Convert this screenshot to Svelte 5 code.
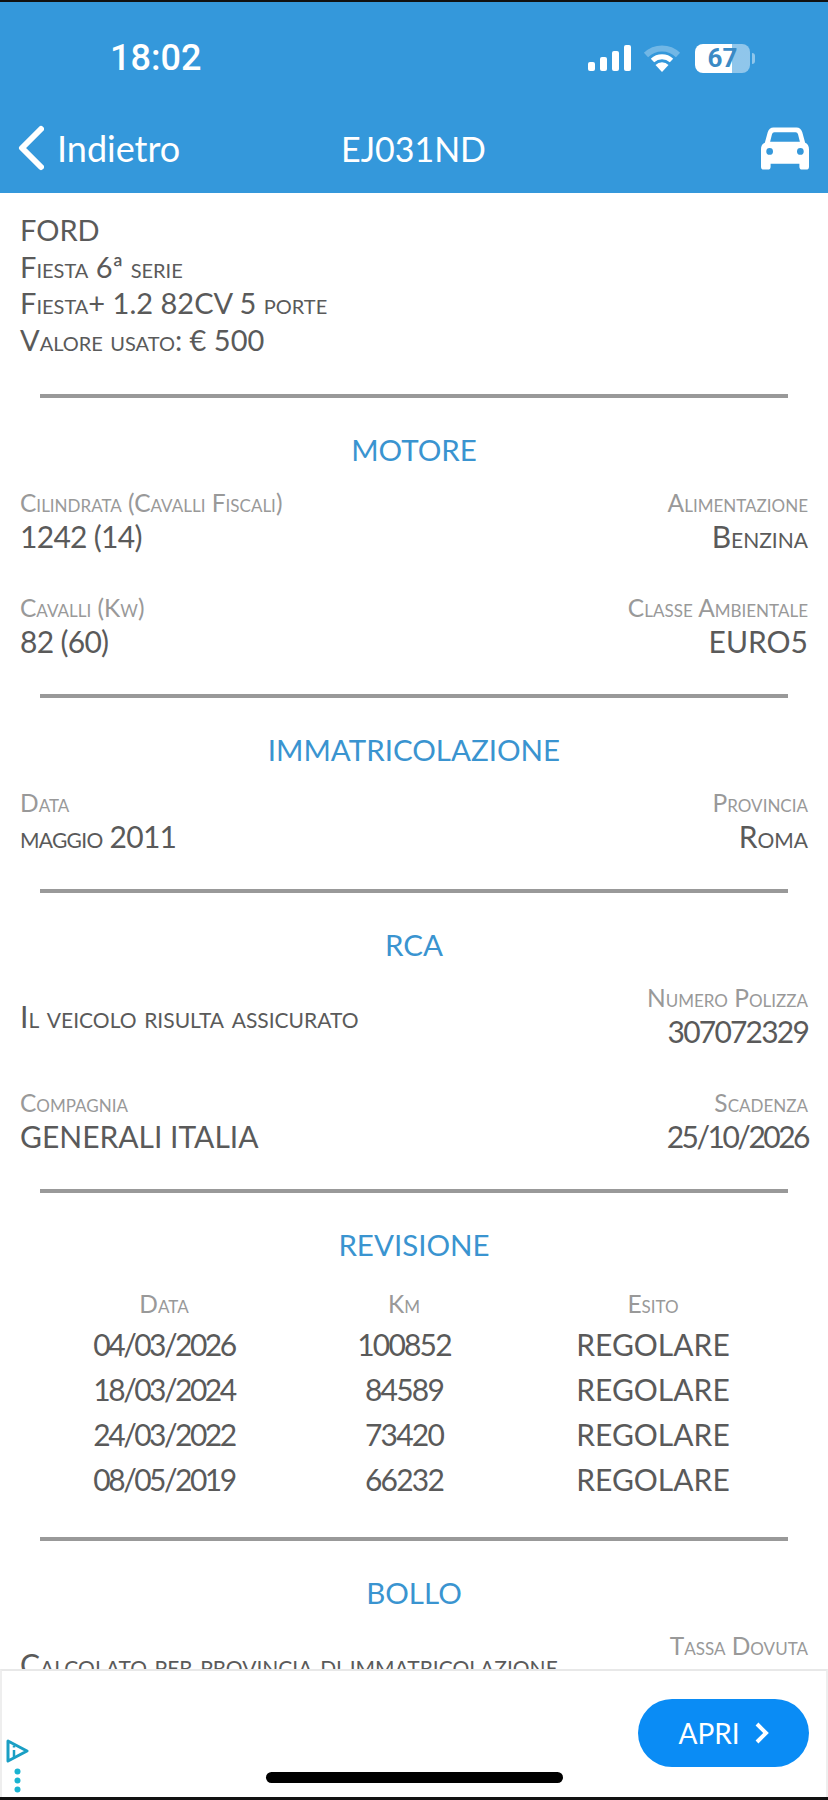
<script>
  const motore = [
    { left: { label: 'Cilindrata (Cavalli Fiscali)', value: '1242 (14)' }, right: { label: 'Alimentazione', value: 'Benzina' } },
    { left: { label: 'Cavalli (Kw)', value: '82 (60)' }, right: { label: 'Classe Ambientale', value: 'EURO5' } }
  ];
  const revisioni = [
    ['04/03/2026', '100852', 'REGOLARE'],
    ['18/03/2024', '84589', 'REGOLARE'],
    ['24/03/2022', '73420', 'REGOLARE'],
    ['08/05/2019', '66232', 'REGOLARE']
  ];
</script>

<div class="screen">
  <header>
    <div class="status">
      <span class="time">18:02</span>
      <div class="status-icons">
        <svg width="43" height="26" viewBox="0 0 43 26" fill="#fff">
          <rect x="0" y="17" width="7" height="9" rx="2" />
          <rect x="12" y="12" width="7" height="14" rx="2" />
          <rect x="24" y="6" width="7" height="20" rx="2" />
          <rect x="36" y="0" width="7" height="26" rx="2" />
        </svg>
        <svg width="38" height="27" viewBox="0 0 38 27" fill="none" stroke-linecap="butt">
          <path d="M3 10 A23 23 0 0 1 35 10" stroke="#fff" stroke-opacity="0.3" stroke-width="6" />
          <path d="M9.500 15.500 A14 14 0 0 1 28.500 15.500" stroke="#fff" stroke-width="5" />
          <path d="M19 27 L12.500 20 A9 9 0 0 1 25.500 20 Z" fill="#fff" />
        </svg>
        <div class="battery">
          <div class="cell"><span>67</span></div>
          <div class="nub"></div>
        </div>
      </div>
    </div>
    <div class="nav">
      <div class="back">
        <svg width="26" height="46" viewBox="0 0 26 46" fill="none" stroke="#fff" stroke-width="6" stroke-linecap="round" stroke-linejoin="round">
          <path d="M23 4 L4 23 L23 42" />
        </svg>
        <span>Indietro</span>
      </div>
      <div class="plate">EJ031ND</div>
      <svg class="car" width="48" height="43" viewBox="0 0 50 44" fill="#fff">
        <path fill-rule="evenodd" d="M13 0 H37 C40 0 42 2 43 5 L46 16 C49 17 50 20 50 23 V41 C50 43 49 44 47 44 H43 C41 44 40 43 40 41 V38 H10 V41 C10 43 9 44 7 44 H3 C1 44 0 43 0 41 V23 C0 20 1 17 4 16 L7 5 C8 2 10 0 13 0 Z M14 5 C12.500 5 12 6 11.500 7 L9.500 15 H40.500 L38.500 7 C38 6 37.500 5 36 5 Z M9 21.500 A3.500 3.500 0 1 0 9 28.500 A3.500 3.500 0 1 0 9 21.500 Z M41 21.500 A3.500 3.500 0 1 0 41 28.500 A3.500 3.500 0 1 0 41 21.500 Z" />
      </svg>
    </div>
  </header>

  <main>
    <section class="intro">
      <div>FORD</div>
      <div>Fiesta 6ª serie</div>
      <div>Fiesta+ 1.2 82CV 5 porte</div>
      <div>Valore usato: € 500</div>
    </section>

    <hr />
    <h2>MOTORE</h2>
    <div class="rows">
      {#each motore as row}
        <div class="row">
          <div>
            <div class="label">{row.left.label}</div>
            <div class="value tight">{row.left.value}</div>
          </div>
          <div class="end">
            <div class="label">{row.right.label}</div>
            <div class="value">{row.right.value}</div>
          </div>
        </div>
      {/each}
    </div>

    <hr />
    <h2>IMMATRICOLAZIONE</h2>
    <div class="rows">
      <div class="row">
        <div>
          <div class="label">Data</div>
          <div class="value tight">maggio 2011</div>
        </div>
        <div class="end">
          <div class="label">Provincia</div>
          <div class="value">Roma</div>
        </div>
      </div>
    </div>

    <hr />
    <h2>RCA</h2>
    <div class="rows">
      <div class="row center">
        <div class="value">Il veicolo risulta assicurato</div>
        <div class="end">
          <div class="label">Numero Polizza</div>
          <div class="value num">307072329</div>
        </div>
      </div>
      <div class="row">
        <div>
          <div class="label">Compagnia</div>
          <div class="value">GENERALI ITALIA</div>
        </div>
        <div class="end">
          <div class="label">Scadenza</div>
          <div class="value date">25/10/2026</div>
        </div>
      </div>
    </div>

    <hr />
    <h2>REVISIONE</h2>
    <div class="table">
      <div class="label">Data</div>
      <div class="label">Km</div>
      <div class="label">Esito</div>
      {#each revisioni as rev}
        <div class="value date">{rev[0]}</div>
        <div class="value num">{rev[1]}</div>
        <div class="value">{rev[2]}</div>
      {/each}
    </div>

    <hr />
    <h2>BOLLO</h2>
    <div class="rows">
      <div class="row center">
        <div class="value">Calcolato per provincia di immatricolazione</div>
        <div class="end">
          <div class="label">Tassa Dovuta</div>
          <div class="value">&nbsp;</div>
        </div>
      </div>
    </div>
  </main>

  <aside class="ad">
    <div class="ad-info">
      <svg width="24" height="24" viewBox="0 0 24 24" fill="none" stroke="#1a9fc4" stroke-width="3" stroke-linejoin="round">
        <path d="M3 2 L22 12 L3 22 Z" />
        <path d="M9 11 V18" stroke-width="2.500" />
        <path d="M9 6.500 V8.500" stroke-width="2.500" />
      </svg>
      <svg width="7" height="25" viewBox="0 0 7 25" fill="#1ab3d1">
        <circle cx="3.500" cy="3.500" r="3" />
        <circle cx="3.500" cy="12.500" r="3" />
        <circle cx="3.500" cy="21.500" r="3" />
      </svg>
    </div>
    <div class="open">
      <span>APRI</span>
      <svg width="15" height="22" viewBox="0 0 15 22" fill="none" stroke="#fff" stroke-width="4">
        <path d="M3 2 L12 11 L3 20" />
      </svg>
    </div>
    <div class="home"></div>
  </aside>
</div>

<style>
  :global(body) {
    margin: 0;
    background: #fff;
  }

  .screen {
    position: relative;
    width: 828px;
    height: 1800px;
    overflow: hidden;
    font-family: Lato, "Open Sans", sans-serif;
    color: #5a5a5a;
    background: #fff;
  }

  header {
    background: #3498db;
    border-top: 2px solid #111;
    height: 193px;
    color: #fff;
    box-sizing: border-box;
  }

  .status {
    display: flex;
    justify-content: space-between;
    align-items: center;
    height: 72px;
    padding: 20px 73px 0 110px;
  }

  .time {
    font-family: Roboto, sans-serif;
    font-size: 36px;
    font-weight: 500;
  }

  .status-icons {
    display: flex;
    align-items: center;
    gap: 12px;
  }

  .battery {
    display: flex;
    align-items: center;
    gap: 2px;
    margin-left: 2px;
  }

  .cell {
    width: 55px;
    height: 29px;
    border-radius: 8px;
    background: linear-gradient(90deg, #fff 67%, rgba(255, 255, 255, 0.45) 67%);
    display: flex;
    align-items: center;
    justify-content: center;
  }

  .cell span {
    font-family: Roboto, sans-serif;
    font-size: 26px;
    font-weight: 700;
    color: #3a8ac5;
  }

  .nub {
    width: 3px;
    height: 11px;
    border-radius: 0 3px 3px 0;
    background: rgba(255, 255, 255, 0.45);
  }

  .nav {
    display: grid;
    grid-template-columns: 1fr auto 1fr;
    align-items: center;
    height: 76px;
    padding: 0 19px 0 18px;
    margin-top: 16px;
  }

  .back {
    display: flex;
    align-items: center;
    gap: 13px;
    font-size: 36px;
  }

  .plate {
    font-size: 34px;
  }

  .car {
    justify-self: end;
  }

  main {
    padding: 19px 20px 0;
  }

  .intro {
    font-size: 29px;
    line-height: 36.600px;
    font-variant: small-caps;
    padding-bottom: 20px;
  }

  .intro > div:first-child {
    font-variant: normal;
  }

  hr {
    border: 0;
    height: 4px;
    background: #999;
    margin: 16px 20px 0;
  }

  h2 {
    margin: 32px 0 0;
    text-align: center;
    font-size: 29.500px;
    line-height: 40px;
    font-weight: 400;
    color: #3a94d0;
  }

  .rows {
    display: flex;
    flex-direction: column;
    gap: 39px;
    margin-top: 18px;
    padding-bottom: 19px;
  }

  .row {
    display: flex;
    justify-content: space-between;
  }

  .row.center {
    align-items: center;
  }

  .end {
    text-align: right;
  }

  .label {
    font-size: 24.500px;
    line-height: 30px;
    font-variant: small-caps;
    color: #999;
  }

  .value {
    font-size: 30px;
    line-height: 36px;
    font-variant: small-caps;
    color: #5a5a5a;
  }

  /* Gill Sans digits are narrower than Lato's */
  .tight {
    letter-spacing: -0.700px;
  }

  .num {
    letter-spacing: -1.800px;
  }

  .date {
    letter-spacing: -2.500px;
  }

  .table {
    display: grid;
    grid-template-columns: 288px 192px 306px;
    justify-items: center;
    align-items: center;
    margin-top: 25px;
    row-gap: 9px;
    padding-bottom: 24px;
  }

  .table .label {
    line-height: 27px;
  }

  .ad {
    position: absolute;
    left: 0;
    right: 0;
    top: 1669px;
    height: 128px;
    box-sizing: border-box;
    border-top: 2px solid #e8e8e8;
    border-left: 2px solid #eee;
    border-right: 2px solid #eee;
    background: #fff;
    box-shadow: 0 3px 0 #111;
  }

  .ad-info {
    position: absolute;
    left: 3px;
    bottom: 4px;
    display: flex;
    flex-direction: column;
    align-items: center;
    gap: 5px;
  }

  .open {
    position: absolute;
    left: 636px;
    top: 28px;
    width: 171px;
    height: 68px;
    border-radius: 34px;
    background: #0a8cf5;
    color: #fff;
    display: flex;
    align-items: center;
    justify-content: center;
    gap: 14px;
    font-size: 28px;
  }

  .home {
    position: absolute;
    left: 264px;
    top: 101px;
    width: 297px;
    height: 11px;
    border-radius: 6px;
    background: #000;
  }
</style>
